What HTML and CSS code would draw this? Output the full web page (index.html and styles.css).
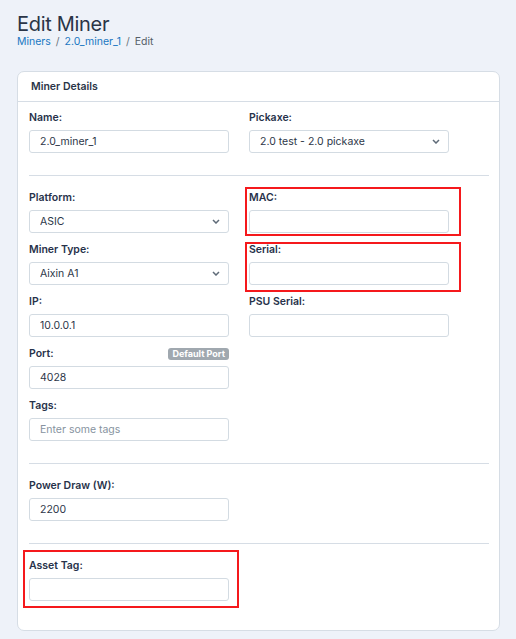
FILE: index.html
```
<!DOCTYPE html>
<html lang="en">
<head>
  <meta charset="UTF-8" />
  <meta name="viewport" content="width=device-width, initial-scale=1.0"/>
  <title>Edit Miner</title>
  <link rel="stylesheet" href="styles.css">
</head>
<body>

<h1>Edit Miner</h1>
<div class="crumbs">
  <a href="#">Miners</a> <span class="sep">/</span> <a href="#">2.0_miner_1</a> <span class="sep">/</span> <span class="here">Edit</span>
</div>

<div class="card">
  <div class="card-head">Miner Details</div>
  <div class="card-body">

    <div class="row">
      <div class="col">
        <div class="field">
          <label>Name:</label>
          <input type="text" value="2.0_miner_1">
        </div>
      </div>
      <div class="col">
        <div class="field">
          <label>Pickaxe:</label>
          <div class="select-wrap">
            <select><option>2.0 test - 2.0 pickaxe</option></select>
            <svg class="chev" width="8" height="5" viewBox="0 0 8 5"><path d="M1 1l3 3 3-3" fill="none" stroke="#5f6b78" stroke-width="1.5"/></svg>
          </div>
        </div>
      </div>
    </div>

    <hr>

    <div class="row">
      <div class="col">
        <div class="field">
          <label>Platform:</label>
          <div class="select-wrap">
            <select><option>ASIC</option></select>
            <svg class="chev" width="8" height="5" viewBox="0 0 8 5"><path d="M1 1l3 3 3-3" fill="none" stroke="#5f6b78" stroke-width="1.5"/></svg>
          </div>
        </div>
        <div class="field">
          <label>Miner Type:</label>
          <div class="select-wrap">
            <select><option>Aixin A1</option></select>
            <svg class="chev" width="8" height="5" viewBox="0 0 8 5"><path d="M1 1l3 3 3-3" fill="none" stroke="#5f6b78" stroke-width="1.5"/></svg>
          </div>
        </div>
        <div class="field">
          <label>IP:</label>
          <input type="text" value="10.0.0.1">
        </div>
        <div class="field">
          <div class="label-row">
            <label>Port:</label>
            <span class="badge">Default Port</span>
          </div>
          <input type="text" value="4028">
        </div>
        <div class="field">
          <label>Tags:</label>
          <input type="text" placeholder="Enter some tags">
        </div>
      </div>
      <div class="col">
        <div class="field flagged mark-mac">
          <label>MAC:</label>
          <input type="text">
        </div>
        <div class="field flagged mark-serial">
          <label>Serial:</label>
          <input type="text">
        </div>
        <div class="field">
          <label>PSU Serial:</label>
          <input type="text">
        </div>
      </div>
    </div>

    <hr>

    <div class="row">
      <div class="col">
        <div class="field">
          <label>Power Draw (W):</label>
          <input type="text" value="2200">
        </div>
      </div>
    </div>

    <hr>

    <div class="row">
      <div class="col">
        <div class="field flagged mark-asset">
          <label>Asset Tag:</label>
          <input type="text">
        </div>
      </div>
    </div>

  </div>
</div>

</body>
</html>
```

FILE: styles.css
```
body {
  margin: 0;
  padding: 13px 16px 0 17px;
  background-color: #eef2f9;
  font-family: Inter, 'Noto Sans', sans-serif;
  color: #2a3547;
}

h1 {
  margin: 0;
  font-size: 20px;
  font-weight: 400;
  line-height: 22px;
  letter-spacing: -0.3px;
}

.crumbs {
  font-size: 10.5px;
  line-height: 14px;
  color: #555e68;
}

.crumbs a {
  color: #1a78c2;
  text-decoration: none;
}

.crumbs .sep {
  margin: 0 2px;
  color: #6c757d;
}

.card {
  margin-top: 22px;
  width: 481px;
  background-color: #fff;
  border: 1px solid #d6dde5;
  border-radius: 7px;
}

.card-head {
  height: 29px;
  line-height: 29px;
  padding: 0 13px;
  font-size: 10.5px;
  font-weight: 600;
  border-bottom: 1px solid #d6dde5;
}

.card-body {
  padding: 9px 10px 19px 11px;
}

.row {
  display: flex;
  gap: 20px;
}

.col {
  width: 200px;
}

.field {
  margin-bottom: 10px;
}

label {
  display: block;
  font-size: 10.5px;
  font-weight: 600;
  line-height: 14px;
  margin-bottom: 5px;
  color: #27324a;
}

.label-row {
  display: flex;
  justify-content: space-between;
  align-items: center;
  margin-bottom: 5px;
}

.label-row label {
  margin-bottom: 0;
}

.badge {
  background-color: #a0a8af;
  color: #fff;
  font-size: 9px;
  font-weight: 700;
  line-height: 12px;
  padding: 0 4px;
  border-radius: 3px;
}

input,
select {
  display: block;
  box-sizing: border-box;
  width: 200px;
  height: 23px;
  padding: 0 10px;
  border: 1px solid #d3dbe2;
  border-radius: 3px;
  background-color: #fff;
  font-family: inherit;
  font-size: 10.5px;
  color: #2d3748;
  outline: none;
}

select {
  appearance: none;
  -webkit-appearance: none;
}

input::placeholder {
  color: #8793a0;
}

.select-wrap {
  position: relative;
}

.chev {
  position: absolute;
  right: 9px;
  top: 9px;
}

hr {
  border: none;
  border-top: 1px solid #d6dde5;
  margin: 12px 0 15px;
}

.flagged {
  position: relative;
}

.flagged::after {
  content: "";
  position: absolute;
  border: 2px solid #f5191c;
  pointer-events: none;
}

.mark-mac::after {
  top: -4px;
  bottom: -3px;
  left: -4px;
  right: -12px;
}

.mark-serial::after {
  top: -1px;
  bottom: -7px;
  left: -4px;
  right: -12px;
}

.mark-asset::after {
  top: -9px;
  bottom: -7px;
  left: -6px;
  right: -10px;
}
```
